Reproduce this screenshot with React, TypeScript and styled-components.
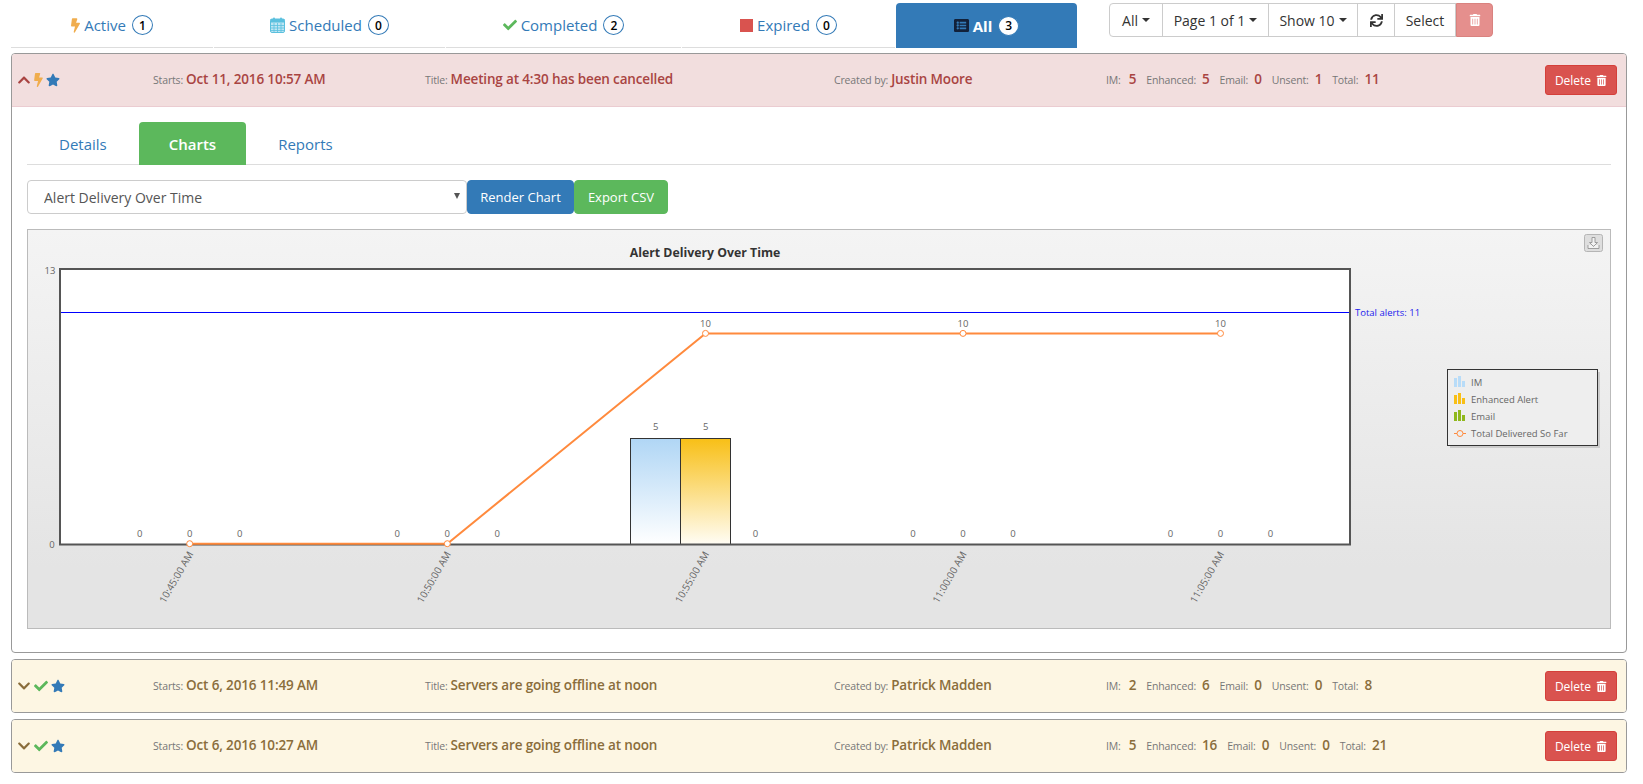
import { ReactNode } from "react"
import styled, { createGlobalStyle } from "styled-components"
import {
  FaBolt,
  FaCheck,
  FaChevronDown,
  FaChevronUp,
  FaListAlt,
  FaSquareFull,
  FaStar,
  FaSync,
  FaTrashAlt
} from "react-icons/fa"

const GlobalStyle = createGlobalStyle`
  * { box-sizing: border-box; }
  html, body { margin: 0; background: #fff; }
  body {
    font-family: "Open Sans", "Liberation Sans", sans-serif;
    font-size: 14px;
    color: #333;
    overflow: hidden;
  }
`

const Page = styled.div`
  width: 1643px;
  height: 784px;
  padding: 3px 16px 0 11px;
`
const TopBar = styled.div`
  display: flex;
  align-items: flex-start;
  height: 50px;
`
const StatusTabs = styled.nav`
  display: flex;
  height: 45px;
`
const StatusTab = styled.a<{ $width: number; $active?: boolean }>`
  width: ${p => p.$width}px;
  margin-right: 1px;
  display: flex;
  align-items: center;
  justify-content: center;
  gap: 4px;
  font-size: 15px;
  color: ${p => (p.$active ? "#fff" : "#337ab7")};
  font-weight: ${p => (p.$active ? 700 : 400)};
  background: ${p => (p.$active ? "#337ab7" : "transparent")};
  border-bottom: ${p => (p.$active ? "none" : "1px solid #ddd")};
  border-radius: ${p => (p.$active ? "4px 4px 0 0" : "0")};
  svg { flex: none; }
`
const Bolt = styled(FaBolt)`
  width: 9px;
  color: #f0ad4e;
`
const Count = styled.span`
  width: 21px;
  height: 20px;
  margin-left: 2px;
  border-radius: 50%;
  display: inline-flex;
  align-items: center;
  justify-content: center;
  font-size: 12px;
  font-weight: 600;
  color: #000;
  background: #fff;
  border: 1px solid #337ab7;
`
const Toolbar = styled.div`
  display: flex;
  height: 34px;
  margin-left: 31px;
`
const ToolButton = styled.button<{ $width: number }>`
  width: ${p => p.$width}px;
  margin-left: -1px;
  display: flex;
  align-items: center;
  justify-content: center;
  gap: 4px;
  padding: 0;
  font: inherit;
  color: #333;
  background: #fff;
  border: 1px solid #ccc;
  &:first-child { margin-left: 0; border-radius: 4px 0 0 4px; }
`
const Caret = styled.span`
  width: 0;
  height: 0;
  border-top: 4px solid #333;
  border-left: 4px solid transparent;
  border-right: 4px solid transparent;
`
const TrashButton = styled.button`
  width: 37px;
  display: flex;
  align-items: center;
  justify-content: center;
  padding: 0;
  color: #fff;
  background: #e58f8d;
  border: 1px solid #d9827f;
  border-radius: 0 4px 4px 0;
`
const Alert = styled.section`
  border: 1px solid #999;
  border-radius: 4px;
  margin-bottom: 6px;
  overflow: hidden;
`
const AlertHead = styled.header<{ $tone: "danger" | "warning" }>`
  display: grid;
  grid-template-columns: 136px 272px 409px 272px 1fr auto;
  align-items: center;
  height: 52px;
  padding: 0 9px 0 5px;
  color: ${p => (p.$tone === "danger" ? "#a94442" : "#8a6d3b")};
  background: ${p => (p.$tone === "danger" ? "#f2dede" : "#fdf6e3")};
`
const HeadIcons = styled.div`
  display: flex;
  align-items: center;
  gap: 3px;
`
const Field = styled.div`
  display: flex;
  align-items: baseline;
  gap: 3px;
  padding-bottom: 3px;
  white-space: nowrap;
`
const FieldLabel = styled.span`
  font-size: 10.5px;
  letter-spacing: -0.15px;
  color: #777;
`
const FieldValue = styled.span`
  font-size: 13.5px;
  letter-spacing: -0.15px;
  font-weight: 600;
`
const Stats = styled.div`
  display: flex;
  align-items: baseline;
  padding-bottom: 3px;
  white-space: nowrap;
`
const StatValue = styled(FieldValue)`
  margin: 0 10px 0 6px;
`
const Stat = styled.span`
  &:first-child ${StatValue} { margin-left: 8px; }
`
const DeleteButton = styled.button`
  grid-column: 6;
  width: 72px;
  height: 30px;
  display: flex;
  align-items: center;
  justify-content: center;
  gap: 5px;
  padding: 0;
  font: inherit;
  font-size: 12px;
  color: #fff;
  background: #d9534f;
  border: 1px solid #d43f3a;
  border-radius: 3px;
`
const AlertBody = styled.div`
  padding: 15px 15px 23px;
  border-top: 1px solid #ebccd1;
`
const SubTabs = styled.nav`
  display: flex;
  height: 43px;
  padding-left: 2px;
  border-bottom: 1px solid #ddd;
`
const SubTab = styled.a<{ $active?: boolean }>`
  display: flex;
  align-items: center;
  height: 43px;
  padding: 0 30px;
  margin-right: 2px;
  font-size: 15px;
  font-weight: ${p => (p.$active ? 600 : 400)};
  color: ${p => (p.$active ? "#fff" : "#337ab7")};
  background: ${p => (p.$active ? "#5cb85c" : "transparent")};
  border-radius: 4px 4px 0 0;
`
const ChartForm = styled.div`
  display: flex;
  height: 34px;
  margin-top: 15px;
`
const SelectWrap = styled.div`
  position: relative;
  width: 440px;
  &::after {
    content: "";
    position: absolute;
    right: 7px;
    top: 13px;
    border-top: 6px solid #555;
    border-left: 3px solid transparent;
    border-right: 3px solid transparent;
  }
`
const ChartSelect = styled.select`
  appearance: none;
  width: 100%;
  height: 34px;
  padding: 0 16px;
  font: inherit;
  color: #555;
  background: #fff;
  border: 1px solid #ccc;
  border-radius: 4px;
`
const FormButton = styled.button<{ $color: string; $width: number }>`
  width: ${p => p.$width}px;
  padding: 0;
  font: inherit;
  font-size: 13px;
  color: #fff;
  background: ${p => p.$color};
  border: 1px solid ${p => p.$color};
  border-radius: 4px;
`
const ChartBox = styled.div`
  height: 400px;
  margin-top: 15px;
  border: 1px solid #bbb;
  background: linear-gradient(#f4f4f4, #e4e4e4 85%);
`
const ChartSvg = styled.svg`
  display: block;
  text {
    font-family: "Open Sans", "Liberation Sans", sans-serif;
    font-size: 9.5px;
    fill: #666;
  }
`
const ChartTitle = styled.text`
  && {
    font-size: 12.3px;
    font-weight: 700;
    fill: #333;
  }
`
const TotalLabel = styled.text`
  && { fill: #2222ee; }
`
const TimeLabel = styled.text`
  && { font-size: 10px; }
`

const slots = [189.7, 447.3, 705.5, 963, 1220.5]

function CalendarIcon() {
  return (
    <svg width={15} height={16} viewBox="0 0 15 16">
      <rect x={0.5} y={2} width={14} height={13.5} rx={1.5} fill="#bfe6f3" stroke="#5bc0de" />
      <rect x={0.5} y={2} width={14} height={3.5} fill="#5bc0de" />
      <rect x={3} y={0.5} width={2} height={3} rx={1} fill="#5bc0de" />
      <rect x={10} y={0.5} width={2} height={3} rx={1} fill="#5bc0de" />
      <path d="M4 6v9M7.5 6v9M11 6v9M1 8.5h13M1 11h13M1 13.5h13" stroke="#5bc0de" strokeWidth={0.8} />
    </svg>
  )
}

function Chart() {
  const line = [
    [slots[0], 543.7],
    [slots[1], 543.7],
    [slots[2], 333.4],
    [slots[3], 333.4],
    [slots[4], 333.4]
  ]
  const zeros = [139.7, 189.7, 239.7, 397.3, 447.3, 497.3, 755.5, 913, 963, 1013, 1170.5, 1220.5, 1270.5]
  const times = ["10:45:00 AM", "10:50:00 AM", "10:55:00 AM", "11:00:00 AM", "11:05:00 AM"]

  return (
    <ChartSvg width={1582} height={398} viewBox="28 230 1582 398">
      <defs>
        <linearGradient id="imFill" x1="0" y1="0" x2="0" y2="1">
          <stop offset="0" stopColor="#b0d6f5" />
          <stop offset="1" stopColor="#fff" />
        </linearGradient>
        <linearGradient id="enhFill" x1="0" y1="0" x2="0" y2="1">
          <stop offset="0" stopColor="#f8bf16" />
          <stop offset="1" stopColor="#fffdf5" />
        </linearGradient>
      </defs>

      <ChartTitle x={705} y={257} textAnchor="middle">Alert Delivery Over Time</ChartTitle>

      <rect x={60} y={269} width={1290} height={275.5} fill="#fff" />
      <line x1={60} x2={1350} y1={312.5} y2={312.5} stroke="#0000ff" />

      <rect x={630.5} y={438.5} width={50} height={106} fill="url(#imFill)" stroke="#333" />
      <rect x={680.5} y={438.5} width={50} height={106} fill="url(#enhFill)" stroke="#333" />

      <rect x={60} y={269} width={1290} height={275.5} fill="none" stroke="#555" strokeWidth={2} />

      <polyline points={line.map(p => p.join(",")).join(" ")} fill="none" stroke="#ff8a3d" strokeWidth={2} />
      {line.map(([x, y]) => (
        <circle key={x} cx={x} cy={y} r={3} fill="#fff" stroke="#ff8a3d" />
      ))}

      <text x={50} y={274} textAnchor="middle">13</text>
      <text x={52} y={548} textAnchor="middle">0</text>

      {zeros.map(x => (
        <text key={x} x={x} y={537} textAnchor="middle">0</text>
      ))}
      <text x={655.7} y={430} textAnchor="middle">5</text>
      <text x={705.7} y={430} textAnchor="middle">5</text>
      {slots.slice(2).map(x => (
        <text key={x} x={x} y={327} textAnchor="middle">10</text>
      ))}

      {slots.map((x, i) => (
        <TimeLabel key={x} textAnchor="end" transform={`translate(${x + 4} 554) rotate(-60)`}>
          {times[i]}
        </TimeLabel>
      ))}

      <TotalLabel x={1355} y={316}>Total alerts: 11</TotalLabel>

      <rect x={1584.5} y={234.5} width={18} height={17} rx={2} fill="#dedede" stroke="#b5b5b5" />
      <path d="M1592 237.5h3v5h2.5l-4 4-4-4h2.5zM1588 245v3.5h11V245" fill="#f2f2f2" stroke="#8a8a8a" strokeWidth={0.8} />

      <rect x={1450} y={372} width={150} height={76} fill="#ccc" />
      <rect x={1447.5} y={369.5} width={150} height={76} fill="#eee" stroke="#333" />
      <g fill="#b8dcf8">
        <rect x={1454} y={378} width={3} height={9} />
        <rect x={1458} y={376} width={3} height={11} />
        <rect x={1462} y={381} width={3} height={6} />
      </g>
      <g fill="#f8bf16">
        <rect x={1454} y={395} width={3} height={9} />
        <rect x={1458} y={393} width={3} height={11} />
        <rect x={1462} y={398} width={3} height={6} />
      </g>
      <g fill="#8fb81c">
        <rect x={1454} y={412} width={3} height={9} />
        <rect x={1458} y={410} width={3} height={11} />
        <rect x={1462} y={415} width={3} height={6} />
      </g>
      <line x1={1454} x2={1466} y1={433.5} y2={433.5} stroke="#ff8a3d" />
      <circle cx={1460} cy={433.5} r={3} fill="#eee" stroke="#ff8a3d" />
      <text x={1471} y={385.5}>IM</text>
      <text x={1471} y={403}>Enhanced Alert</text>
      <text x={1471} y={420}>Email</text>
      <text x={1471} y={437}>Total Delivered So Far</text>
    </ChartSvg>
  )
}

interface IAlert {
  tone: "danger" | "warning"
  open: boolean
  statusIcon: ReactNode
  starts: string
  title: string
  author: string
  stats: [string, number][]
}

const alerts: IAlert[] = [
  {
    tone: "danger",
    open: true,
    statusIcon: <Bolt size={14} />,
    starts: "Oct 11, 2016 10:57 AM",
    title: "Meeting at 4:30 has been cancelled",
    author: "Justin Moore",
    stats: [["IM", 5], ["Enhanced", 5], ["Email", 0], ["Unsent", 1], ["Total", 11]]
  },
  {
    tone: "warning",
    open: false,
    statusIcon: <FaCheck size={14} color="#5cb85c" />,
    starts: "Oct 6, 2016 11:49 AM",
    title: "Servers are going offline at noon",
    author: "Patrick Madden",
    stats: [["IM", 2], ["Enhanced", 6], ["Email", 0], ["Unsent", 0], ["Total", 8]]
  },
  {
    tone: "warning",
    open: false,
    statusIcon: <FaCheck size={14} color="#5cb85c" />,
    starts: "Oct 6, 2016 10:27 AM",
    title: "Servers are going offline at noon",
    author: "Patrick Madden",
    stats: [["IM", 5], ["Enhanced", 16], ["Email", 0], ["Unsent", 0], ["Total", 21]]
  }
]

function App() {
  return (
    <Page>
      <GlobalStyle />
      <TopBar>
        <StatusTabs>
          <StatusTab $width={202}><Bolt size={15} /> Active <Count>1</Count></StatusTab>
          <StatusTab $width={231}><CalendarIcon /> Scheduled <Count>0</Count></StatusTab>
          <StatusTab $width={235}><FaCheck size={14} color="#5cb85c" /> Completed <Count>2</Count></StatusTab>
          <StatusTab $width={213}><FaSquareFull size={13} color="#d9534f" /> Expired <Count>0</Count></StatusTab>
          <StatusTab $width={181} $active><FaListAlt size={15} color="#12213a" /> All <Count>3</Count></StatusTab>
        </StatusTabs>
        <Toolbar>
          <ToolButton $width={54}>All <Caret /></ToolButton>
          <ToolButton $width={107}>Page 1 of 1 <Caret /></ToolButton>
          <ToolButton $width={90}>Show 10 <Caret /></ToolButton>
          <ToolButton $width={38}><FaSync size={13} /></ToolButton>
          <ToolButton $width={62}>Select</ToolButton>
          <TrashButton><FaTrashAlt size={12} /></TrashButton>
        </Toolbar>
      </TopBar>

      {alerts.map(alert => (
        <Alert key={alert.starts}>
          <AlertHead $tone={alert.tone}>
            <HeadIcons>
              {alert.open ? <FaChevronUp size={14} /> : <FaChevronDown size={14} />}
              {alert.statusIcon}
              <FaStar size={14} color="#337ab7" />
            </HeadIcons>
            <Field><FieldLabel>Starts:</FieldLabel> <FieldValue>{alert.starts}</FieldValue></Field>
            <Field><FieldLabel>Title:</FieldLabel> <FieldValue>{alert.title}</FieldValue></Field>
            <Field><FieldLabel>Created by:</FieldLabel> <FieldValue>{alert.author}</FieldValue></Field>
            <Stats>
              {alert.stats.map(([label, value]) => (
                <Stat key={label}>
                  <FieldLabel>{label}:</FieldLabel>
                  <StatValue>{value}</StatValue>
                </Stat>
              ))}
            </Stats>
            <DeleteButton>Delete <FaTrashAlt size={11} /></DeleteButton>
          </AlertHead>
          {alert.open && (
            <AlertBody>
              <SubTabs>
                <SubTab>Details</SubTab>
                <SubTab $active>Charts</SubTab>
                <SubTab>Reports</SubTab>
              </SubTabs>
              <ChartForm>
                <SelectWrap>
                  <ChartSelect defaultValue="delivery">
                    <option value="delivery">Alert Delivery Over Time</option>
                  </ChartSelect>
                </SelectWrap>
                <FormButton $color="#337ab7" $width={107}>Render Chart</FormButton>
                <FormButton $color="#5cb85c" $width={94}>Export CSV</FormButton>
              </ChartForm>
              <ChartBox>
                <Chart />
              </ChartBox>
            </AlertBody>
          )}
        </Alert>
      ))}
    </Page>
  )
}

export default App
